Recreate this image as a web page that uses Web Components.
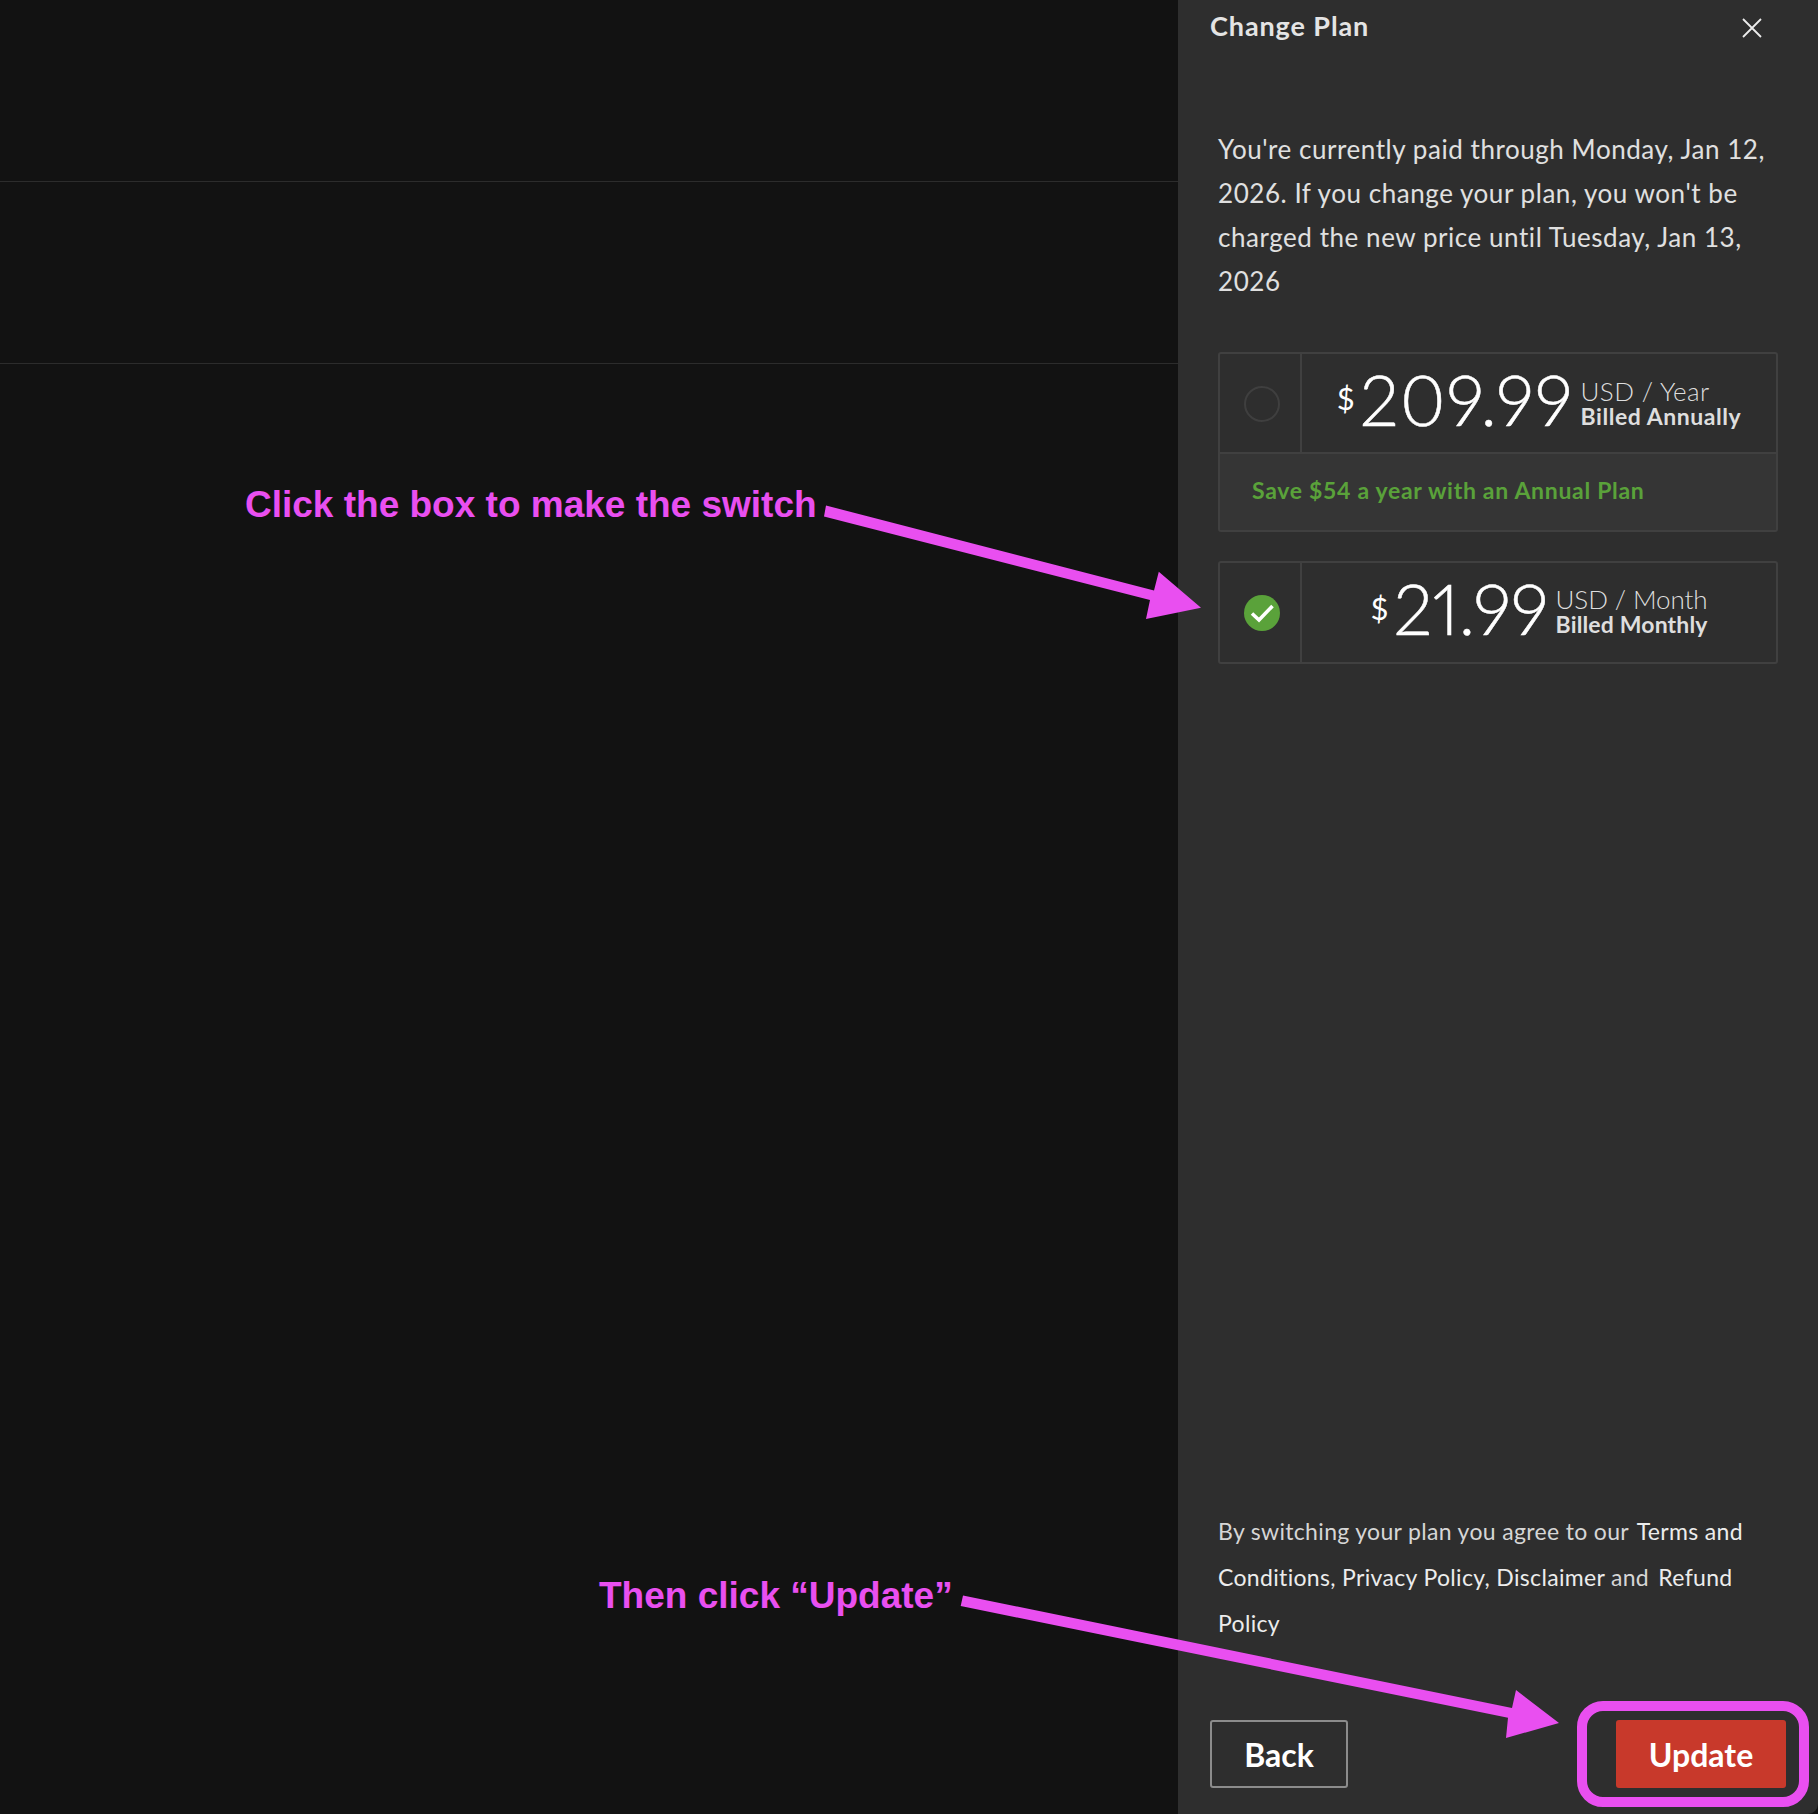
<!DOCTYPE html>
<html lang="en">
<head>
<meta charset="utf-8">
<title>Change Plan</title>
<style>
  html, body { margin: 0; padding: 0; background: #121212; }
  body { font-family: "Lato", "Noto Sans", sans-serif; }
</style>
</head>
<body>
<plan-page>
  <list-pane slot="main"></list-pane>
  <change-plan-panel slot="panel" heading="Change Plan">
    <p slot="intro">You're currently paid through Monday, Jan 12, 2026. If you change your plan, you won't be charged the new price until Tuesday, Jan 13, 2026</p>
    <plan-option slot="options" price="209.99" unit="USD / Year" billing="Billed Annually" note="Save $54 a year with an Annual Plan" style="--amt-track:1.1px;--unit-track:.4px;--bill-track:.55px;--txt-shift:2px;--mark-top:1px"></plan-option>
    <plan-option slot="options" price="21.99" unit="USD / Month" billing="Billed Monthly" selected style="--amt-track:0;--unit-track:-.1px;--bill-track:.15px"></plan-option>
    <legal-note slot="legal"></legal-note>
    <plan-button slot="back" variant="outline">Back</plan-button>
    <plan-button slot="next" variant="solid">Update</plan-button>
  </change-plan-panel>
  <call-outs slot="over"></call-outs>
</plan-page>

<script>
class PlanPage extends HTMLElement {
  constructor() {
    super();
    this.attachShadow({ mode: "open" }).innerHTML = `
    <style>
      :host { display: flex; position: relative; width: 1818px; height: 1814px; overflow: hidden; background: #121212; }
      .main { flex: 1; min-width: 0; }
      .panel { flex: none; width: 640px; }
    </style>
    <div class="main"><slot name="main"></slot></div>
    <div class="panel"><slot name="panel"></slot></div>
    <slot name="over"></slot>`;
  }
}

class ListPane extends HTMLElement {
  constructor() {
    super();
    this.attachShadow({ mode: "open" }).innerHTML = `
    <style>
      :host { display: block; }
      div { height: 181px; border-bottom: 1px solid #2c2c2c; }
    </style>
    <div></div><div></div>`;
  }
}

class ChangePlanPanel extends HTMLElement {
  constructor() {
    super();
    this.attachShadow({ mode: "open" }).innerHTML = `
    <style>
      :host { display: flex; flex-direction: column; box-sizing: border-box; height: 1814px; background: #2e2e2e; color: #e2e2e2; border-bottom-right-radius: 10px; }
      header { display: flex; justify-content: space-between; align-items: center; height: 54px; padding: 0 55px 0 32px; }
      h2 { margin: 0 0 3px; font: 700 27px "Lato", sans-serif; letter-spacing: .9px; color: #e4e4e4; }
      svg { display: block; width: 22px; height: 22px; margin-top: 2px; }
      .intro { padding: 73px 40px 0; }
      ::slotted(p) { margin: 0; font: 400 26px/44px "Lato", sans-serif; letter-spacing: .55px; color: #e0e0e0; }
      .options { display: flex; flex-direction: column; gap: 29px; padding: 0 40px; margin-top: 49px; }
      .legal { margin-top: auto; padding: 0 40px; }
      footer { display: flex; justify-content: space-between; padding: 0 32px 26px; margin-top: 74px; }
    </style>
    <header>
      <h2>${this.getAttribute("heading")}</h2>
      <svg viewBox="0 0 22 22" fill="none" stroke="#ececec" stroke-width="1.8"><path d="M2 2 20 20M20 2 2 20"/></svg>
    </header>
    <div class="intro"><slot name="intro"></slot></div>
    <div class="options"><slot name="options"></slot></div>
    <div class="legal"><slot name="legal"></slot></div>
    <footer><slot name="back"></slot><slot name="next"></slot></footer>`;
  }
}

class PlanOption extends HTMLElement {
  constructor() {
    super();
    const note = this.getAttribute("note");
    const selected = this.hasAttribute("selected");
    const mark = selected
      ? `<svg viewBox="0 0 36 36"><circle cx="18" cy="18" r="18" fill="#5aa23a"/><path d="M8 18.5 15 25 28.5 11" fill="none" stroke="#fff" stroke-width="3.6"/></svg>`
      : `<svg viewBox="0 0 36 36"><circle cx="18" cy="18" r="17" fill="none" stroke="#3f3f3f" stroke-width="2"/></svg>`;
    this.attachShadow({ mode: "open" }).innerHTML = `
    <style>
      :host { display: block; box-sizing: border-box; border: 2px solid #404040; border-radius: 3px; }
      .row { display: flex; height: ${note ? 98 : 99}px; }
      .mark { flex: none; box-sizing: border-box; width: 82px; padding: var(--mark-top, 0) 0 0 4px; display: flex; align-items: center; justify-content: center; border-right: 2px solid #404040; }
      .mark svg { width: 36px; height: 36px; display: block; }
      .price { flex: 1; display: flex; align-items: center; justify-content: center; color: #fff; }
      .cur { font: 400 31px "Lato", sans-serif; margin: 0 5px 10px 0; }
      .amt { font: 300 70px/1 "Lato", sans-serif; font-variant-numeric: proportional-nums; letter-spacing: var(--amt-track, 0); -webkit-text-stroke: .5px #fff; margin: 0 7px 9px 0; }
      .txt { display: flex; flex-direction: column; color: #dedede; margin-top: var(--txt-shift, -2px); }
      .unit { font: 300 26px/25px "Lato", sans-serif; letter-spacing: var(--unit-track, 0); }
      .bill { font: 700 23px/25px "Lato", sans-serif; letter-spacing: var(--bill-track, 0); }
      .note { height: 78px; display: flex; align-items: center; padding: 0 32px 4px; background: #353535; border-top: 2px solid #404040; font: 700 23px "Lato", sans-serif; letter-spacing: .7px; color: #5aa23a; box-sizing: border-box; }
    </style>
    <div class="row">
      <div class="mark">${mark}</div>
      <div class="price">
        <span class="cur">$</span><span class="amt">${this.getAttribute("price")}</span>
        <div class="txt"><span class="unit">${this.getAttribute("unit")}</span><span class="bill">${this.getAttribute("billing")}</span></div>
      </div>
    </div>
    ${note ? `<div class="note">${note}</div>` : ""}`;
  }
}

class LegalNote extends HTMLElement {
  constructor() {
    super();
    this.attachShadow({ mode: "open" }).innerHTML = `
    <style>
      :host { display: block; font: 400 23px/46px "Lato", sans-serif; letter-spacing: .33px; color: #d6d6d6; }
      a { color: #ececec; text-decoration: none; }
      .first { margin-left: 2px; }
      .last { margin-left: 3px; }
    </style>
    By switching your plan you agree to our <a class="first">Terms and</a> <a>Conditions,</a> <a>Privacy Policy,</a> <a>Disclaimer</a> and <a class="last">Refund</a> <a>Policy</a>`;
  }
}

class PlanButton extends HTMLElement {
  constructor() {
    super();
    this.attachShadow({ mode: "open" }).innerHTML = `
    <style>
      :host { display: flex; align-items: center; justify-content: center; box-sizing: border-box; height: 68px; border-radius: 3px; font: 700 32px "Lato", sans-serif; color: #fff; }
      :host([variant="outline"]) { width: 138px; border: 2px solid #8c8c8c; }
      :host([variant="solid"]) { width: 170px; background: #c8392b; }
    </style>
    <slot></slot>`;
  }
}

class CallOuts extends HTMLElement {
  constructor() {
    super();
    this.attachShadow({ mode: "open" }).innerHTML = `
    <style>
      :host { position: absolute; inset: 0; display: block; pointer-events: none; }
      svg { position: absolute; left: 0; top: 0; }
      span { position: absolute; font: 700 37px/1 "Liberation Sans", sans-serif; color: #e94ff0; white-space: nowrap; }
    </style>
    <svg width="1818" height="1814" fill="#e94ff0">
      <path d="M826 505.5 1154 590.5 1158.8 571.7 1201 607.7 1146 619 1150 600 824 516.5Z"/>
      <path d="M963 1595.5 1512 1708 1516 1690 1559 1723 1506 1738 1508 1717.7 960.7 1606Z"/>
      <rect x="1582" y="1706" width="222" height="96" rx="21" fill="none" stroke="#e94ff0" stroke-width="10"/>
    </svg>
    <span style="left:245px;top:486px">Click the box to make the switch</span>
    <span style="left:599px;top:1577px">Then click “Update”</span>`;
  }
}

customElements.define("plan-page", PlanPage);
customElements.define("list-pane", ListPane);
customElements.define("change-plan-panel", ChangePlanPanel);
customElements.define("plan-option", PlanOption);
customElements.define("legal-note", LegalNote);
customElements.define("plan-button", PlanButton);
customElements.define("call-outs", CallOuts);
</script>
</body>
</html>
